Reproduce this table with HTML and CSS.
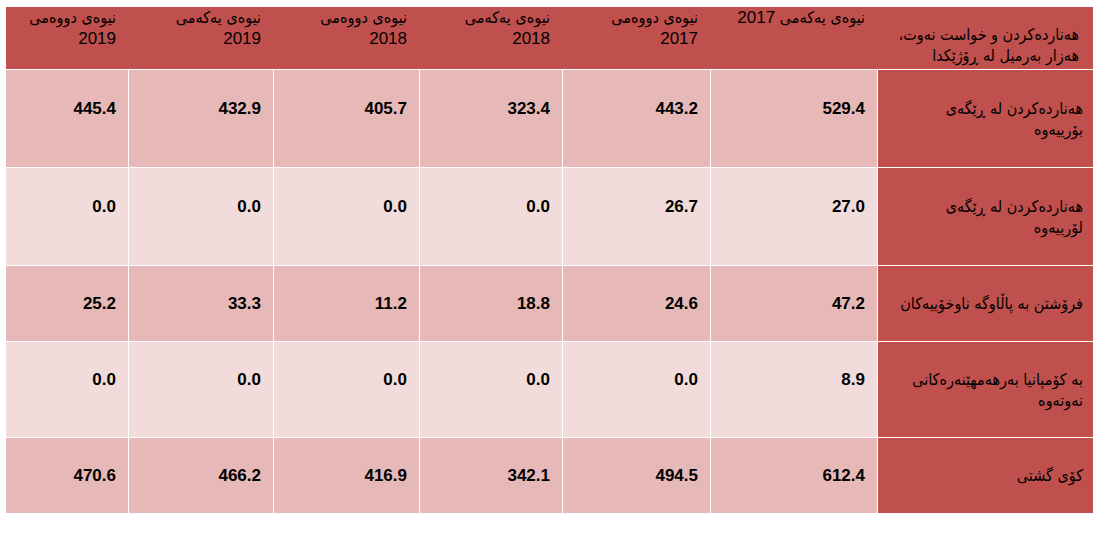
FILE: index.html
```html
<!DOCTYPE html>
<html lang="ckb">
<head>
<meta charset="utf-8">
<title>هەناردەکردن و خواست نەوت</title>
<link rel="stylesheet" href="styles.css">
</head>
<body>
<div class="page">
  <div class="sheet" dir="rtl">
    <div class="cell head label-head"><span class="ar">هەناردەکردن و خواست نەوت،<br>هەزار بەرمیل لە ڕۆژێکدا</span></div>
    <div class="cell head"><span><span class="ar">نیوەی یەکەمی</span> 2017</span></div>
    <div class="cell head"><span><span class="ar">نیوەی دووەمی</span><br>2017</span></div>
    <div class="cell head"><span><span class="ar">نیوەی یەکەمی</span><br>2018</span></div>
    <div class="cell head"><span><span class="ar">نیوەی دووەمی</span><br>2018</span></div>
    <div class="cell head"><span><span class="ar">نیوەی یەکەمی</span><br>2019</span></div>
    <div class="cell head"><span><span class="ar">نیوەی دووەمی</span><br>2019</span></div>

    <div class="cell label"><span class="ar">هەناردەکردن لە ڕێگەی<br>بۆرییەوە</span></div>
    <div class="cell num dark lift">529.4</div>
    <div class="cell num dark lift">443.2</div>
    <div class="cell num dark lift">323.4</div>
    <div class="cell num dark lift">405.7</div>
    <div class="cell num dark lift">432.9</div>
    <div class="cell num dark lift last">445.4</div>

    <div class="cell label"><span class="ar">هەناردەکردن لە ڕێگەی<br>لۆرییەوە</span></div>
    <div class="cell num light lift">27.0</div>
    <div class="cell num light lift">26.7</div>
    <div class="cell num light lift">0.0</div>
    <div class="cell num light lift">0.0</div>
    <div class="cell num light lift">0.0</div>
    <div class="cell num light lift last">0.0</div>

    <div class="cell label"><span class="ar">فرۆشتن بە پاڵاوگە ناوخۆییەکان</span></div>
    <div class="cell num dark">47.2</div>
    <div class="cell num dark">24.6</div>
    <div class="cell num dark">18.8</div>
    <div class="cell num dark">11.2</div>
    <div class="cell num dark">33.3</div>
    <div class="cell num dark last">25.2</div>

    <div class="cell label"><span class="ar">بە کۆمپانیا بەرهەمهێنەرەکانی<br>نەوتەوە</span></div>
    <div class="cell num light lift">8.9</div>
    <div class="cell num light lift">0.0</div>
    <div class="cell num light lift">0.0</div>
    <div class="cell num light lift">0.0</div>
    <div class="cell num light lift">0.0</div>
    <div class="cell num light lift last">0.0</div>

    <div class="cell label"><span class="ar">کۆی گشتی</span></div>
    <div class="cell num dark">612.4</div>
    <div class="cell num dark">494.5</div>
    <div class="cell num dark">342.1</div>
    <div class="cell num dark">416.9</div>
    <div class="cell num dark">466.2</div>
    <div class="cell num dark last">470.6</div>
  </div>
</div>
</body>
</html>
```

FILE: styles.css
```css
html, body {
  margin: 0;
  padding: 0;
  background: #ffffff;
}

.page {
  padding: 7px 0 0 6px;
}

.sheet {
  display: grid;
  width: 1087px;
  grid-template-columns: 216px 167px 148px 143px 146px 145px 122px;
  grid-template-rows: 62px 98px 98px 76px 96px 76px;
  font-family: "Liberation Sans", Arial, sans-serif;
  font-size: 17px;
  line-height: 21px;
  color: #000000;
}

.ar {
  font-family: "DejaVu Sans Condensed", "DejaVu Sans", sans-serif;
  font-size: 16px;
}

.cell {
  box-sizing: border-box;
  display: flex;
  white-space: nowrap;
  text-align: right;
}

.head {
  background: #c0504d;
  align-items: flex-start;
  padding: 0 12px 0 4px;
}

.label-head {
  align-items: flex-end;
  padding: 0 14px 3px 4px;
}

.label {
  background: #c0504d;
  border-top: 1px solid #ffffff;
  border-left: 1px solid #ffffff;
  align-items: center;
  padding: 0 10px 0 4px;
}

.num {
  border-top: 1px solid #ffffff;
  border-left: 1px solid #ffffff;
  align-items: center;
  padding: 0 12px 0 4px;
  font-weight: bold;
}

.num.last {
  border-left: 0;
}

.num.lift {
  padding-bottom: 21px;
}

.dark {
  background: #e6b9b8;
}

.light {
  background: #f2dcdb;
}
```
